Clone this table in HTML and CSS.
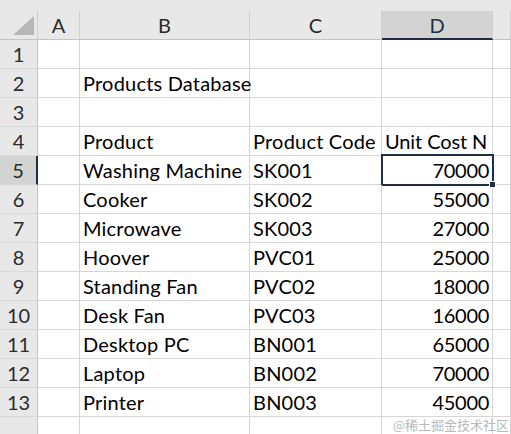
FILE: index.html
```html
<!DOCTYPE html>
<html>
<head>
<meta charset="utf-8">
<link rel="stylesheet" href="styles.css">
</head>
<body>
<div class="sheet">
  <div class="row head">
    <div class="corner"><svg width="22" height="20" viewBox="0 0 22 20"><polygon points="21,0 21,19 0,19" fill="#b7b7b7"/></svg></div>
    <div class="ch">A</div>
    <div class="ch">B</div>
    <div class="ch">C</div>
    <div class="ch sel">D</div>
    <div class="ch"></div>
  </div>
  <div class="row"><div class="rh">1</div><div class="c"></div><div class="c"></div><div class="c"></div><div class="c"></div><div class="c"></div></div>
  <div class="row"><div class="rh">2</div><div class="c"></div><div class="c">Products Database</div><div class="c"></div><div class="c"></div><div class="c"></div></div>
  <div class="row"><div class="rh">3</div><div class="c"></div><div class="c"></div><div class="c"></div><div class="c"></div><div class="c"></div></div>
  <div class="row"><div class="rh">4</div><div class="c"></div><div class="c">Product</div><div class="c">Product Code</div><div class="c tight">Unit Cost N</div><div class="c"></div></div>
  <div class="row"><div class="rh sel">5</div><div class="c"></div><div class="c">Washing Machine</div><div class="c">SK001</div><div class="c num active">70000<span class="handle"></span></div><div class="c"></div></div>
  <div class="row"><div class="rh">6</div><div class="c"></div><div class="c">Cooker</div><div class="c">SK002</div><div class="c num">55000</div><div class="c"></div></div>
  <div class="row"><div class="rh">7</div><div class="c"></div><div class="c">Microwave</div><div class="c">SK003</div><div class="c num">27000</div><div class="c"></div></div>
  <div class="row"><div class="rh">8</div><div class="c"></div><div class="c">Hoover</div><div class="c">PVC01</div><div class="c num">25000</div><div class="c"></div></div>
  <div class="row"><div class="rh">9</div><div class="c"></div><div class="c">Standing Fan</div><div class="c">PVC02</div><div class="c num">18000</div><div class="c"></div></div>
  <div class="row"><div class="rh">10</div><div class="c"></div><div class="c">Desk Fan</div><div class="c">PVC03</div><div class="c num">16000</div><div class="c"></div></div>
  <div class="row"><div class="rh">11</div><div class="c"></div><div class="c">Desktop PC</div><div class="c">BN001</div><div class="c num">65000</div><div class="c"></div></div>
  <div class="row"><div class="rh">12</div><div class="c"></div><div class="c">Laptop</div><div class="c">BN002</div><div class="c num">70000</div><div class="c"></div></div>
  <div class="row"><div class="rh">13</div><div class="c"></div><div class="c">Printer</div><div class="c">BN003</div><div class="c num">45000</div><div class="c"></div></div>
  <div class="row"><div class="rh"></div><div class="c"></div><div class="c"></div><div class="c"></div><div class="c"></div><div class="c"></div></div>
  <div class="watermark">@稀土掘金技术社区</div>
</div>
</body>
</html>
```
FILE: styles.css
```css
html, body {
  margin: 0;
  padding: 0;
  background: #ffffff;
}
.sheet {
  position: relative;
  width: 511px;
  height: 434px;
  overflow: hidden;
  font-family: Lato, "Noto Sans", sans-serif;
  color: #000000;
}
.row {
  display: grid;
  grid-template-columns: 38px 42px 170px 132px 111px 1fr;
  height: 29px;
}
.row.head {
  height: 40px;
  padding-top: 11px;
  box-sizing: border-box;
  background: #e8e8e8;
}
.corner {
  border-right: 1px solid #cfcfcf;
  border-bottom: 1px solid #c4c4c4;
  box-sizing: border-box;
  padding: 5px 0 0 13px;
}
.corner svg {
  display: block;
}
.ch {
  box-sizing: border-box;
  border-right: 1px solid #cfcfcf;
  border-bottom: 1px solid #c4c4c4;
  display: flex;
  justify-content: center;
  align-items: flex-end;
  padding-bottom: 3px;
  font-size: 20px;
  line-height: 22px;
  color: #2b2b2b;
}
.ch.sel {
  background: #d3d3d3;
  border-bottom: 2px solid #1f2f44;
  padding-bottom: 2px;
  color: #1f2f44;
}
.rh {
  box-sizing: border-box;
  background: #e8e8e8;
  border-right: 1px solid #c4c4c4;
  border-bottom: 1px solid #dadada;
  display: flex;
  justify-content: center;
  align-items: flex-end;
  padding-bottom: 3px;
  font-size: 20px;
  line-height: 22px;
  color: #2b2b2b;
}
.rh.sel {
  background: #d3d3d3;
  border-right: 2px solid #1f2f44;
}
.c {
  position: relative;
  box-sizing: border-box;
  border-right: 1px solid #d6d6d6;
  border-bottom: 1px solid #d6d6d6;
  display: flex;
  align-items: flex-end;
  padding: 0 3px 3px 3px;
  font-size: 20px;
  line-height: 22px;
  letter-spacing: 0.2px;
  white-space: nowrap;
}
.c.tight {
  letter-spacing: -0.1px;
}
.c.num {
  justify-content: flex-end;
  letter-spacing: -0.3px;
}
.c.active::after {
  content: "";
  position: absolute;
  top: -2px;
  left: -1px;
  right: -2px;
  bottom: -2px;
  border: 2px solid #1f2f44;
}
.handle {
  position: absolute;
  right: -4px;
  bottom: -4px;
  width: 5px;
  height: 5px;
  background: #1f2f44;
  border: 1px solid #ffffff;
  z-index: 2;
}
.watermark {
  position: absolute;
  right: 2px;
  bottom: 1px;
  font-family: "Noto Sans CJK SC", sans-serif;
  font-size: 13px;
  line-height: 16px;
  color: #b9b9b9;
}
```
